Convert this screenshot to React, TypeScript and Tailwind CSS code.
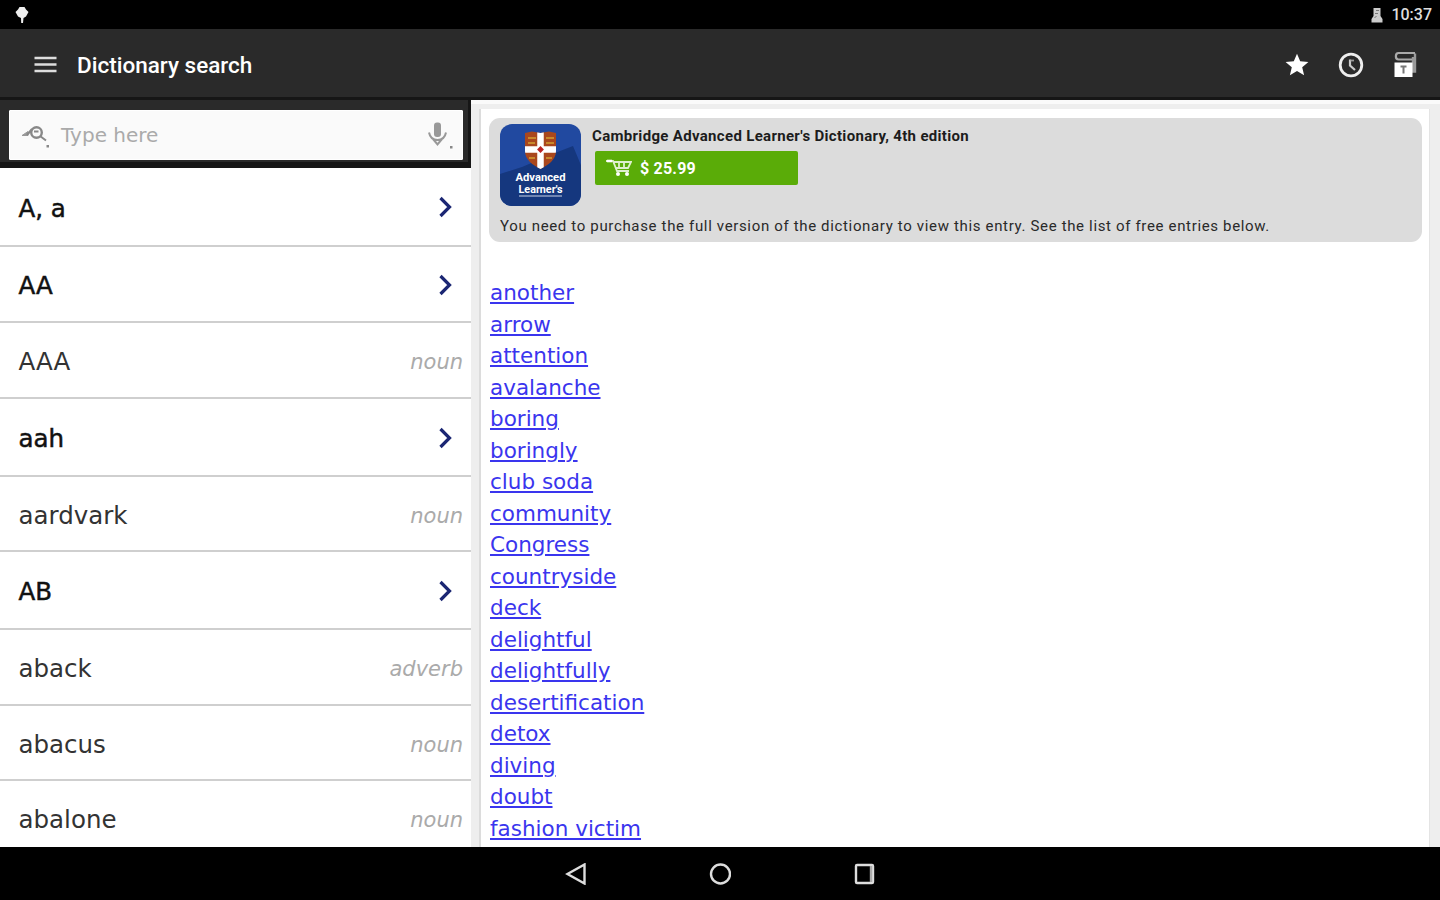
import React from "react";

type Entry = {
  word: string;
  pos?: string;
  height: string;
};

// entries without a part of speech open a group and are drawn heavier
const entries: Entry[] = [
  { word: "A, a", height: "h-[79px]" },
  { word: "AA", height: "h-[76px]" },
  { word: "AAA", pos: "noun", height: "h-[76px]" },
  { word: "aah", height: "h-[78px]" },
  { word: "aardvark", pos: "noun", height: "h-[75px]" },
  { word: "AB", height: "h-[78px]" },
  { word: "aback", pos: "adverb", height: "h-[76px]" },
  { word: "abacus", pos: "noun", height: "h-[75px]" },
  { word: "abalone", pos: "noun", height: "h-[76px]" },
];

const links = [
  "another",
  "arrow",
  "attention",
  "avalanche",
  "boring",
  "boringly",
  "club soda",
  "community",
  "Congress",
  "countryside",
  "deck",
  "delightful",
  "delightfully",
  "desertification",
  "detox",
  "diving",
  "doubt",
  "fashion victim",
];

const StatusBar = () => (
  <div className="flex h-[29px] shrink-0 items-center justify-between bg-black pl-[14px] pr-2">
    <svg className="h-[18px] w-4" viewBox="0 0 16 18">
      <path d="M5.500 1h5l1.500 2.500 2.500 2.500-2.500 4.500-2.500 1.500-.5 5H7.200L7 12l-3-1.500L1.500 6 4 3.500z" fill="#eee" />
    </svg>
    <div className="flex items-center">
      <svg className="mr-2 h-4 w-3" viewBox="0 0 12 16">
        <path d="M2.500 1h7v8l2 3v3.500H.5V12l2-3z" fill="#ccc" />
        <path d="M5 3.500h3M4 6.500h3M3.500 11l2-2" stroke="#777" />
      </svg>
      <span className="text-[16px] font-medium leading-none text-[#ddd]">10:37</span>
    </div>
  </div>
);

const AppBar = () => (
  <header className="flex h-[71px] shrink-0 items-center border-b-[3px] border-[#161616] bg-[#2a2a2a] pl-[34px] pr-[23px] pt-[3px]">
    <svg className="h-[18px] w-[23px]" viewBox="0 0 23 18">
      <path d="M.5 2h22M.5 8.500h22M.5 15h22" stroke="#ddd" strokeWidth="2.600" />
    </svg>
    <h1 className="ml-5 mt-px text-[22.500px] font-medium leading-none text-white">Dictionary search</h1>
    <div className="ml-auto flex items-center">
      <svg className="h-6 w-6" viewBox="0 0 24 24">
        <path
          d="M12 .8l3.200 7.400 8.200.7-6.200 5.300 1.900 8L12 17.900l-7.100 4.300 1.900-8L.6 8.900l8.200-.7z"
          fill="#fff"
        />
      </svg>
      <svg className="ml-[29px] h-[26px] w-[26px]" viewBox="0 0 26 26">
        <circle cx="13" cy="13" r="10.800" fill="none" stroke="#eee" strokeWidth="2.800" />
        <path d="M12 7.500v6l5 4.500" fill="none" stroke="#ccc" strokeWidth="2.200" />
        <path d="M12.500 8.500h3.500" stroke="#999" strokeWidth="1.800" />
      </svg>
      <svg className="ml-[29px] h-[27px] w-6" viewBox="0 0 24 27">
        <path d="M22 2.500v18h-2V6" fill="none" stroke="#999" strokeWidth="2.400" />
        <path d="M19 8.500H5.500C2 8.500 2 2 5.500 2H22" fill="none" stroke="#aaa" strokeWidth="2.200" />
        <path d="M1.500 11.500h18V26h-18z" fill="#fff" />
        <path d="M7.500 15.500h6M10.500 15v7.500" stroke="#777" strokeWidth="2" />
      </svg>
    </div>
  </header>
);

const SearchBox = () => (
  <div className="h-[68px] shrink-0 border-b-[6px] border-r-[3px] border-[#161616] bg-[#2a2a2a] pl-[9px] pr-[5px] pt-[10px]">
    <div className="flex h-[50px] items-center rounded-[1px] border border-white bg-[#fafafa] pl-[11px] pr-2">
      <svg className="h-[26px] w-[30px]" viewBox="0 0 30 26">
        <path d="M1 13.500l6-4v4z" fill="#999" stroke="#999" />
        <circle cx="15.500" cy="10.500" r="5.300" fill="none" stroke="#888" strokeWidth="2.400" />
        <path d="M6 13l5-6M13 9.500h4.500M19 14l6 4.500" fill="none" stroke="#888" strokeWidth="2" />
        <path d="M25.500 23h2.500v2.500h-2.500z" fill="#888" />
      </svg>
      <span className="ml-[10px] font-['DejaVu_Sans',sans-serif] text-[20px] leading-none text-[#aaa]">Type here</span>
      <svg className="ml-auto h-7 w-[26px]" viewBox="0 0 26 28">
        <rect x="6" y="1.500" width="7" height="14.500" rx="3" fill="#999" />
        <path d="M1 11.500c1 5 4 7.500 8.500 7.500s7.500-2.500 8.500-7.500M5 18l4.500 5.500L14 18" fill="none" stroke="#999" strokeWidth="2" />
        <path d="M22 25h2.500v2.500H22z" fill="#888" />
      </svg>
    </div>
  </div>
);

const DictionaryLogo = () => (
  <svg className="h-[82px] w-[81px] shrink-0" viewBox="0 0 81 82">
    <defs>
      <clipPath id="tile">
        <rect width="81" height="82" rx="12" />
      </clipPath>
      <clipPath id="shield">
        <path d="M25 9l7-1.500L40.500 9l8.500-1.500L56 9v18c0 9-8 14-15.500 18C33 41 25 36 25 27z" />
      </clipPath>
    </defs>
    <g clipPath="url(#tile)">
      <rect width="81" height="82" fill="#2149a0" />
      <path d="M0 50l22-7 33-14 18-7 10 24v36H0z" fill="#15377e" />
    </g>
    <g clipPath="url(#shield)">
      <rect x="24" y="7" width="34" height="39" fill="#a9471d" />
      <path d="M28 14h8M46 14h8M28 19h7M46 19h8M29 34h6M46 34h6" stroke="#c98a2c" strokeWidth="2" />
      <path d="M40.500 7v39M24 25.500h34" stroke="#fff" strokeWidth="6.500" />
      <path d="M38.500 25.500l2-2 2 2-2 2z" fill="#b22" stroke="#b22" strokeWidth="2" />
    </g>
    <g fill="#fff" fontFamily="Roboto, sans-serif" fontSize="11" fontWeight="700" textAnchor="middle">
      <text x="40.500" y="57" textLength="50" lengthAdjust="spacingAndGlyphs">
        Advanced
      </text>
      <text x="40.500" y="69" textLength="44" lengthAdjust="spacingAndGlyphs">
        Learner's
      </text>
    </g>
    <path d="M19 72h43" stroke="#8fa0c4" strokeWidth="1.500" />
  </svg>
);

const PurchaseCard = () => (
  <section className="h-[124px] rounded-[11px] bg-[#dcdcdc] pl-[11px] pt-[6px]">
    <div className="flex">
      <DictionaryLogo />
      <div className="ml-[11px]">
        <h2 className="mt-[3px] whitespace-nowrap text-[15px] font-bold leading-[18px] tracking-[0.320px] text-[#1c1c1c]">
          Cambridge Advanced Learner's Dictionary, 4th edition
        </h2>
        <button className="ml-[3px] mt-[6px] flex h-[34px] w-[203px] items-center rounded-[2px] bg-[#5aac08] pl-[11px] text-white">
          <svg className="h-[18px] w-[26px]" viewBox="0 0 26 18">
            <path d="M0 2h7l4 10h12M8 3h17l-3 6H10M13 3v6M18 3v6" fill="none" stroke="#dff0ce" strokeWidth="1.800" />
            <path d="M1 2h5" stroke="#fff" strokeWidth="2.600" />
            <circle cx="12" cy="15" r="2" fill="#fff" />
            <circle cx="21" cy="15" r="2" fill="#fff" />
          </svg>
          <span className="ml-2 mt-px text-[16px] font-bold leading-none tracking-[0.200px]">$ 25.99</span>
        </button>
      </div>
    </div>
    <p className="mt-[11px] whitespace-nowrap text-[15px] leading-[18px] tracking-[0.655px] text-[#2a2a2a]">
      You need to purchase the full version of the dictionary to view this entry. See the list of free entries below.
    </p>
  </section>
);

const NavBar = () => (
  <footer className="flex h-[53px] shrink-0 items-center justify-center gap-[122px] bg-black">
    <svg className="h-[22px] w-[22px]" viewBox="0 0 22 22" fill="none" stroke="#ddd" strokeWidth="2.400">
      <path d="M19.500 1.500v19L2.500 11z" />
    </svg>
    <svg className="h-[22px] w-[22px]" viewBox="0 0 22 22" fill="none" stroke="#ddd" strokeWidth="2.400">
      <circle cx="11.500" cy="11" r="9.500" />
    </svg>
    <svg className="h-[22px] w-[22px]" viewBox="0 0 22 22" fill="none" stroke="#ddd" strokeWidth="2.400">
      <rect x="3" y="2" width="17" height="18" rx="1" />
      <path d="M18 3v16" stroke="#aaa" />
    </svg>
  </footer>
);

const App = () => {
  return (
    <div className="flex h-[900px] w-[1440px] flex-col overflow-hidden bg-white font-['Roboto',sans-serif]">
      <StatusBar />
      <AppBar />

      <div className="flex min-h-0 flex-1">
        {/* Word list */}
        <aside className="flex w-[471px] shrink-0 flex-col overflow-hidden">
          <SearchBox />
          <ul className="font-['DejaVu_Sans',sans-serif]">
            {entries.map((entry) => (
              <li
                key={entry.word}
                className={`flex items-center justify-between border-b-2 border-[#cfcfcf] pl-[18.500px] pr-2 ${entry.height}`}
              >
                <span
                  className={`pt-[5px] text-[24.500px] leading-none ${
                    entry.pos ? "text-[#333]" : "text-[#111] [-webkit-text-stroke:0.500px_#111]"
                  }`}
                >
                  {entry.word}
                </span>
                {entry.pos ? (
                  <span className="pt-[5px] text-[21px] italic leading-none text-[#aaa]">{entry.pos}</span>
                ) : (
                  <svg className="mr-[10px] mt-px h-[22px] w-[15px]" viewBox="0 0 15 22">
                    <path d="M2.500 2l9 9-9 9" fill="none" stroke="#1b2673" strokeWidth="3.200" />
                  </svg>
                )}
              </li>
            ))}
          </ul>
        </aside>

        {/* Article */}
        <main className="flex min-w-0 flex-1 border-t-[4px] border-[#fafafa] bg-[#eee] pr-[10px] pt-[5px]">
          <div className="w-[8px] shrink-0" />
          <div className="min-w-0 flex-1 overflow-hidden border-l-2 border-r border-l-[#dcdcdc] border-r-[#e4e4e4] bg-white pl-2 pr-[7px] pt-[9px]">
            <PurchaseCard />
            <ul className="mt-[35px] pl-px font-['DejaVu_Sans',sans-serif] text-[21.500px] leading-[31.500px] text-[#3a35ee]">
              {links.map((word) => (
                <li key={word}>
                  <a href="#" className="underline decoration-[1.500px] underline-offset-2">
                    {word}
                  </a>
                </li>
              ))}
            </ul>
          </div>
        </main>
      </div>

      <NavBar />
    </div>
  );
};

export default App;
